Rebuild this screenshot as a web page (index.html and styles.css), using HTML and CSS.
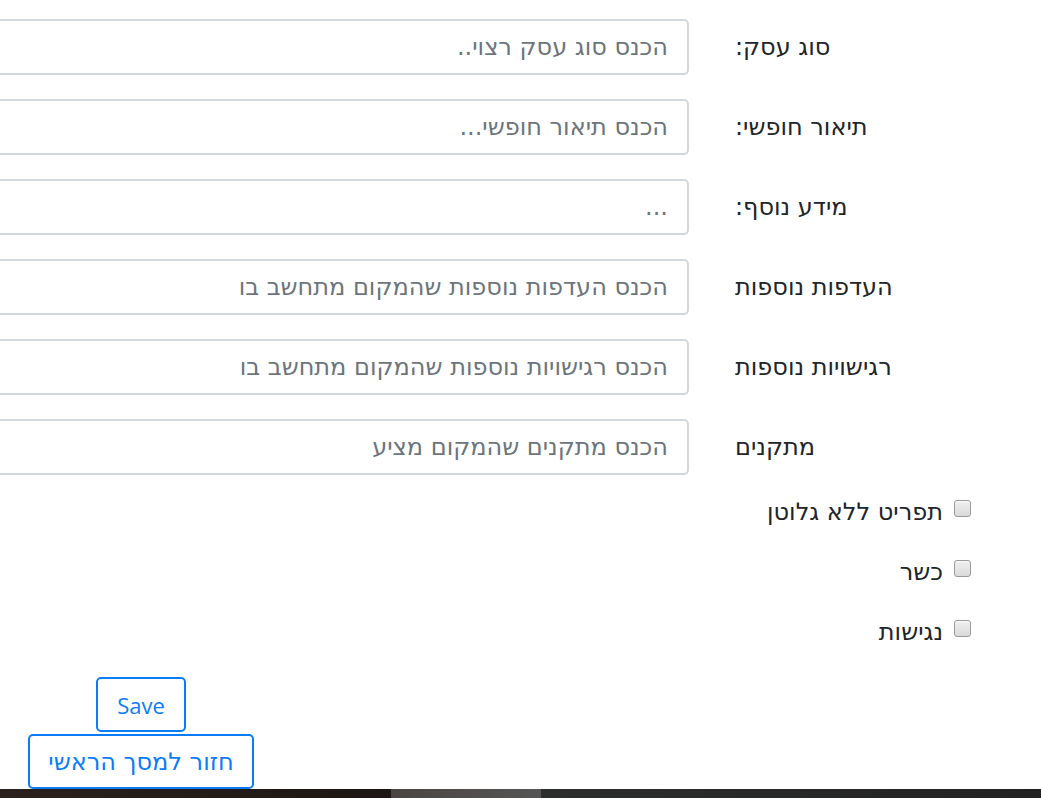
FILE: index.html
```html
<!DOCTYPE html>
<html lang="he" dir="rtl">
<head>
<meta charset="utf-8">
<title>טופס עסק</title>
<link rel="stylesheet" href="styles.css">
</head>
<body>
<main class="page">
  <form class="form">
    <div class="field">
      <label class="field-label" for="f1">סוג עסק:</label>
      <input class="field-input" id="f1" type="text" placeholder="הכנס סוג עסק רצוי..">
    </div>
    <div class="field">
      <label class="field-label" for="f2">תיאור חופשי:</label>
      <input class="field-input" id="f2" type="text" placeholder="הכנס תיאור חופשי...">
    </div>
    <div class="field">
      <label class="field-label" for="f3">מידע נוסף:</label>
      <input class="field-input" id="f3" type="text" placeholder="...">
    </div>
    <div class="field">
      <label class="field-label" for="f4">העדפות נוספות</label>
      <input class="field-input" id="f4" type="text" placeholder="הכנס העדפות נוספות שהמקום מתחשב בו">
    </div>
    <div class="field">
      <label class="field-label" for="f5">רגישויות נוספות</label>
      <input class="field-input" id="f5" type="text" placeholder="הכנס רגישויות נוספות שהמקום מתחשב בו">
    </div>
    <div class="field">
      <label class="field-label" for="f6">מתקנים</label>
      <input class="field-input" id="f6" type="text" placeholder="הכנס מתקנים שהמקום מציע">
    </div>

    <div class="checks">
      <label class="check"><input class="check-box" type="checkbox"><span>תפריט ללא גלוטן</span></label>
      <label class="check"><input class="check-box" type="checkbox"><span>כשר</span></label>
      <label class="check"><input class="check-box" type="checkbox"><span>נגישות</span></label>
    </div>

    <div class="actions">
      <button class="btn btn-save" type="button" dir="ltr">Save</button>
      <button class="btn" type="button">חזור למסך הראשי</button>
    </div>
  </form>
</main>
<div class="strip">
  <span class="strip-a"></span>
  <span class="strip-b"></span>
  <span class="strip-c"></span>
</div>
</body>
</html>
```

FILE: styles.css
```css
html, body {
  margin: 0;
  padding: 0;
  overflow: hidden;
  height: 100%;
}

body {
  font-family: "DejaVu Sans", sans-serif;
  color: #212529;
  background: #fff;
  font-size: 24px;
  display: flex;
  flex-direction: column;
}

.page {
  flex: 1;
  padding-top: 19px;
}

.form {
  margin-left: -40px;
  display: flex;
  flex-direction: column;
}

.field {
  display: grid;
  grid-template-columns: 306px 1fr;
  column-gap: 46px;
  align-items: center;
  margin-bottom: 24px;
}

.field-label {
  text-align: left;
  font-size: 24px;
  line-height: 1.5;
}

.field-input {
  box-sizing: border-box;
  height: 56px;
  width: 100%;
  border: 2px solid #d3d7dc;
  border-radius: 5px;
  padding: 0 19px;
  font-family: inherit;
  font-size: 24px;
  color: #495057;
  background: #fff;
  outline: none;
}

.field-input::placeholder {
  color: #6c757d;
  opacity: 1;
}

.checks {
  margin-top: -17px;
  padding-right: 70px;
  display: flex;
  flex-direction: column;
}

.check {
  height: 60px;
  display: flex;
  align-items: center;
  gap: 11px;
  font-size: 24px;
}

.check-box {
  appearance: none;
  -webkit-appearance: none;
  margin: 0;
  width: 17px;
  height: 17px;
  box-sizing: border-box;
  border: 1px solid #9a9a9a;
  border-radius: 3px;
  background: linear-gradient(#f0f0f0, #d9d9d9);
  box-shadow: inset 0 1px 1px rgba(255,255,255,0.8);
  position: relative;
  top: -4px;
}

.actions {
  margin-top: 15px;
  align-self: flex-end;
  width: 282px;
  margin-left: 40px;
  display: flex;
  flex-direction: column;
  align-items: center;
  gap: 2px;
}

.btn {
  box-sizing: border-box;
  height: 55px;
  padding: 0 18px;
  border: 2px solid #0a7cfa;
  border-radius: 5px;
  background: #fff;
  color: #0b7dfb;
  font-family: inherit;
  font-size: 24px;
  cursor: pointer;
}

.btn-save {
  font-family: "Open Sans", sans-serif;
  font-size: 22px;
  padding: 0 19px;
}

.strip {
  direction: ltr;
  display: flex;
  height: 9px;
  flex: none;
}

.strip-a {
  width: 391px;
  background: linear-gradient(90deg, #2a211c, #1c1714);
}

.strip-b {
  width: 150px;
  background: linear-gradient(90deg, #4a4542, #555555);
}

.strip-c {
  flex: 1;
  background: linear-gradient(90deg, #2c2d2d, #222222);
}
```
